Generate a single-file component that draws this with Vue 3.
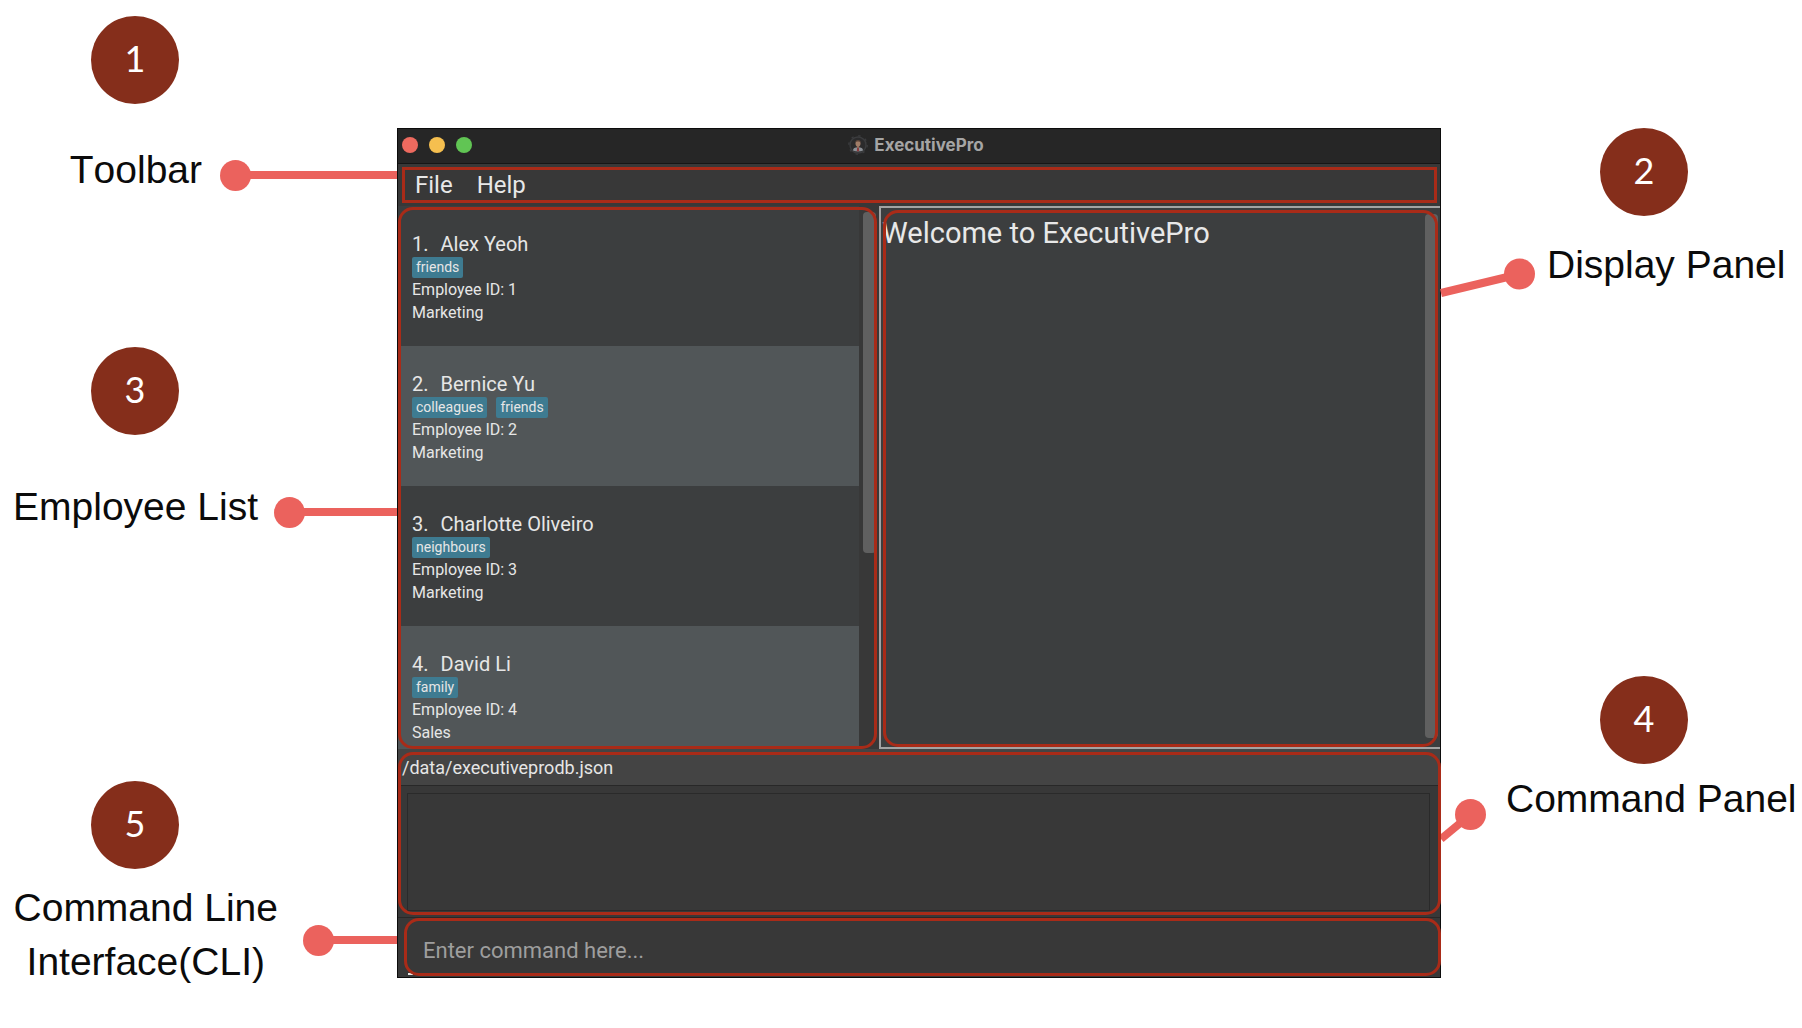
<script setup>
const employees = [
  { id: 1, name: 'Alex Yeoh', tags: ['friends'], department: 'Marketing' },
  { id: 2, name: 'Bernice Yu', tags: ['colleagues', 'friends'], department: 'Marketing' },
  { id: 3, name: 'Charlotte Oliveiro', tags: ['neighbours'], department: 'Marketing' },
  { id: 4, name: 'David Li', tags: ['family'], department: 'Sales' },
]
</script>

<template>
  <main class="guide">
    <div class="notes notes-left">
      <section class="note note-toolbar">
        <span class="badge">1</span>
        <div class="note-row">
          <h2 class="label">Toolbar</h2>
          <span class="pointer pointer-long"></span>
        </div>
      </section>
      <section class="note note-list">
        <span class="badge">3</span>
        <div class="note-row">
          <h2 class="label">Employee List</h2>
          <span class="pointer pointer-medium"></span>
        </div>
      </section>
      <section class="note note-cli">
        <span class="badge">5</span>
        <div class="note-row">
          <h2 class="label">Command Line<br />Interface(CLI)</h2>
          <span class="pointer pointer-short"></span>
        </div>
      </section>
    </div>

    <div class="window">
      <header class="titlebar">
        <div class="lights">
          <button class="light close" aria-label="Close"></button>
          <button class="light minimise" aria-label="Minimise"></button>
          <button class="light zoom" aria-label="Zoom"></button>
        </div>
        <h1 class="title">
          <svg class="app-icon" viewBox="0 0 20 20" aria-hidden="true">
            <circle cx="10" cy="10" r="8" fill="#2b2b2c" stroke="#3b3c3e" stroke-width="1.4" />
            <circle cx="10" cy="10" r="9.2" fill="none" stroke="#3b3c3e" stroke-width="1.4" stroke-dasharray="2.4 4.82" />
            <path d="M5 15.6c0-2.2 1.8-3.3 5-3.3s5 1.1 5 3.3c-2.8 1.3-7.2 1.3-10 0z" fill="#8b9096" />
            <path d="M9.2 12.3h1.600l.4 3.900h-2.400z" fill="#8d3a3a" />
            <path d="M8.800 10h2.400v2.200l-1.200.8-1.200-.8z" fill="#94705c" />
            <ellipse cx="10" cy="8.400" rx="2.500" ry="2.900" fill="#a07d68" />
            <path d="M7.300 8c-.2-2 .9-3 2.700-3s2.900 1 2.700 3c-.5-1.200-1.300-1.500-2.700-1.500s-2.200.3-2.700 1.500z" fill="#5a4439" />
          </svg>
          <span>ExecutivePro</span>
        </h1>
      </header>

      <div class="toolbar">
        <nav class="menu" aria-label="Application menu">
          <button class="menu-item">File</button>
          <button class="menu-item">Help</button>
        </nav>
      </div>

      <div class="panes">
        <section class="list-pane" aria-label="Employee list">
          <ul class="employees">
            <li v-for="person in employees" :key="person.id" class="employee">
              <h3 class="name"><span>{{ person.id }}.</span><span>{{ person.name }}</span></h3>
              <div class="tags">
                <span v-for="tag in person.tags" :key="tag" class="tag">{{ tag }}</span>
              </div>
              <p class="detail">Employee ID: {{ person.id }}</p>
              <p class="detail">{{ person.department }}</p>
            </li>
          </ul>
          <div class="track list-track"><div class="thumb list-thumb"></div></div>
          <div class="outline outline-list"></div>
        </section>

        <section class="display-pane" aria-label="Display panel">
          <p class="welcome">Welcome to ExecutivePro</p>
          <div class="track display-track"><div class="thumb"></div></div>
          <div class="outline outline-display"></div>
        </section>
      </div>

      <section class="command-panel">
        <p class="path">/data/executiveprodb.json</p>
        <div class="result">
          <textarea class="result-box" aria-label="Command result" readonly></textarea>
        </div>
        <div class="outline outline-command"></div>
      </section>

      <form class="cli" @submit.prevent>
        <input class="cli-input" type="text" aria-label="Command" placeholder="Enter command here..." />
        <span class="cursor"></span>
        <div class="outline outline-cli"></div>
      </form>
    </div>

    <div class="notes notes-right">
      <section class="note note-display">
        <span class="badge">2</span>
        <div class="note-row">
          <svg class="slant slant-display" width="94" height="60" viewBox="0 0 94 60" aria-hidden="true">
            <path d="M0 56L79 37" />
            <circle cx="78.500" cy="37" r="15.500" />
          </svg>
          <h2 class="label">Display Panel</h2>
        </div>
      </section>
      <section class="note note-command">
        <span class="badge">4</span>
        <div class="note-row">
          <svg class="slant slant-command" width="45" height="76" viewBox="0 0 45 76" aria-hidden="true">
            <path d="M0 68L29 44" />
            <circle cx="29.500" cy="43.500" r="15.500" />
          </svg>
          <h2 class="label">Command Panel</h2>
        </div>
      </section>
    </div>
  </main>
</template>

<style>
body {
  margin: 0;
  background: #fff;
}
</style>

<style scoped>
.guide {
  display: grid;
  grid-template-columns: 397px minmax(700px, 1fr) 361px;
  align-items: start;
  font-family: Roboto, "Liberation Sans", sans-serif;
}
h1, h2, h3, p, ul {
  margin: 0;
  padding: 0;
  font-weight: 400;
}
ul {
  list-style: none;
}
button, input, textarea {
  box-sizing: border-box;
  margin: 0;
  padding: 0;
  border: 0;
  background: none;
  font-family: inherit;
}

/* Notes beside the window */
.notes {
  display: flex;
  flex-direction: column;
}
.notes-left {
  padding-top: 16px;
}
.notes-right {
  padding-top: 128px;
}
.note {
  display: flex;
  flex-direction: column;
}
.badge {
  width: 88px;
  height: 88px;
  border-radius: 50%;
  background: #852e1b;
  color: #fff;
  font-family: Lato, sans-serif;
  font-size: 36px;
  line-height: 84px;
  text-align: center;
}
.notes-left .badge {
  margin-left: 91px;
}
.notes-right .badge {
  margin-left: 159px;
}
.note-row {
  display: flex;
}
.label {
  color: #0b0b0b;
  font-family: "Liberation Sans", Arial, sans-serif;
  font-size: 39px;
  font-kerning: none;
  line-height: 54px;
  text-align: center;
  white-space: nowrap;
}
.notes-left .note-row {
  justify-content: flex-end;
  align-items: center;
}
.note-toolbar {
  gap: 39px;
}
.note-list {
  gap: 45px;
  margin-top: 150px;
}
.note-cli {
  gap: 12px;
  margin-top: 247px;
}
.note-display {
  gap: 22px;
}
.note-command {
  gap: 8px;
  margin-top: 384px;
}
.pointer {
  display: flex;
  align-items: center;
  padding-top: 10px;
}
.pointer::before {
  content: "";
  width: 31px;
  height: 31px;
  border-radius: 50%;
  background: #eb625d;
}
.pointer::after {
  content: "";
  flex: 1;
  height: 8px;
  margin-left: -2px;
  background: #eb625d;
}
.pointer-long {
  width: 177px;
  margin-left: 18px;
}
.pointer-medium {
  width: 123px;
  margin-left: 16px;
}
.pointer-short {
  width: 94px;
  margin-left: 25px;
}
.slant {
  overflow: visible;
  flex: none;
}
.slant path {
  stroke: #eb625d;
  stroke-width: 8;
}
.slant circle {
  fill: #eb625d;
}
.slant-display {
  margin: -1px 12px -6px 0;
}
.slant-command {
  margin: -1px 20px -22px 0;
}

/* Application window */
.window {
  margin-top: 128px;
  border: 1px solid #0c0c0c;
  background: #383838;
  color: #e6e6e6;
}
.titlebar {
  box-sizing: border-box;
  display: grid;
  grid-template-columns: 1fr auto 1fr;
  align-items: center;
  height: 35px;
  padding: 0 10px 2px 4px;
  border-bottom: 1px solid #161616;
  background: #262626;
}
.lights {
  display: flex;
  gap: 11px;
}
.light {
  width: 16px;
  height: 16px;
  border-radius: 50%;
}
.close {
  background: #ed6a5f;
}
.minimise {
  background: #f5bf4f;
}
.zoom {
  background: #61c554;
}
.title {
  display: flex;
  align-items: center;
  gap: 6px;
  color: #a5a5a5;
  font-family: Inter, sans-serif;
  font-size: 17px;
  font-weight: 700;
  line-height: 24px;
}
.app-icon {
  width: 20px;
  height: 20px;
}
.toolbar {
  padding: 3px 3px 3px 4px;
}
.menu {
  display: flex;
  gap: 24px;
  padding-left: 10px;
  border: 3px solid #a92b18;
}
.menu-item {
  color: #e8e8e8;
  font-size: 24px;
  line-height: 30px;
}
.panes {
  display: grid;
  grid-template-columns: 480fr 562fr;
  height: 543px;
}
.list-pane {
  position: relative;
  display: flex;
  min-height: 0;
}
.employees {
  flex: 1;
  overflow: hidden;
  background: #3c3e3f;
}
.employee {
  box-sizing: border-box;
  height: 140px;
  padding: 26px 14px 22px;
}
.employee:nth-child(even) {
  background: #515658;
}
.name {
  display: flex;
  gap: 12px;
  font-size: 20px;
  line-height: 25px;
}
.tags {
  display: flex;
  gap: 9px;
}
.tag {
  padding: 0 4px;
  border-radius: 2px;
  background: #3e7b91;
  font-size: 14px;
  line-height: 21px;
}
.detail {
  font-size: 16px;
  line-height: 23px;
}
.track {
  box-sizing: border-box;
  display: flex;
  flex: none;
}
.list-track {
  width: 19px;
  padding: 6px 2px 0 4px;
}
.thumb {
  flex: 1;
  border-radius: 4px;
  background: #606060;
}
.list-thumb {
  height: 341px;
}
.display-pane {
  position: relative;
  display: flex;
  margin-left: 1px;
  border: 2px solid #a3a3a3;
  border-right: 0;
  background: #3c3e3f;
}
.welcome {
  flex: 1;
  padding: 8px 0 0 1px;
  color: #e8e8e8;
  font-size: 29px;
  line-height: 34px;
}
.display-track {
  width: 15px;
  padding: 6px 2px 9px 0;
}
.command-panel {
  position: relative;
}
.path {
  padding: 1px 0 0 4px;
  border-bottom: 1px solid #282828;
  background: #444;
  font-size: 18px;
  line-height: 35px;
}
.result {
  padding: 7px 10px 6px 9px;
  border-bottom: 1px solid #282828;
}
.result-box {
  display: block;
  width: 100%;
  height: 118px;
  border: 1px solid #2a2a2a;
  color: inherit;
  font-size: 18px;
  resize: none;
}
.cli {
  position: relative;
}
.cli-input {
  display: block;
  width: 100%;
  height: 59px;
  padding: 6px 25px 0;
  color: #e6e6e6;
  font-size: 22px;
}
.cli-input::placeholder {
  color: #9e9e9e;
  opacity: 1;
}
.cursor {
  position: absolute;
  bottom: 2px;
  left: 10px;
  width: 5px;
  height: 2px;
  background: #e6e6e6;
}

/* Outlines laid over the areas that the notes point at */
.outline {
  position: absolute;
  border: 3px solid #a92b18;
  border-radius: 15px;
  pointer-events: none;
}
.outline-list {
  inset: 1px 1px 0 0;
}
.outline-display {
  inset: 2px 2px 0;
}
.outline-command {
  inset: 3px -1px 3px 0;
}
.outline-cli {
  inset: 0 -1px 1px 6px;
}
</style>
